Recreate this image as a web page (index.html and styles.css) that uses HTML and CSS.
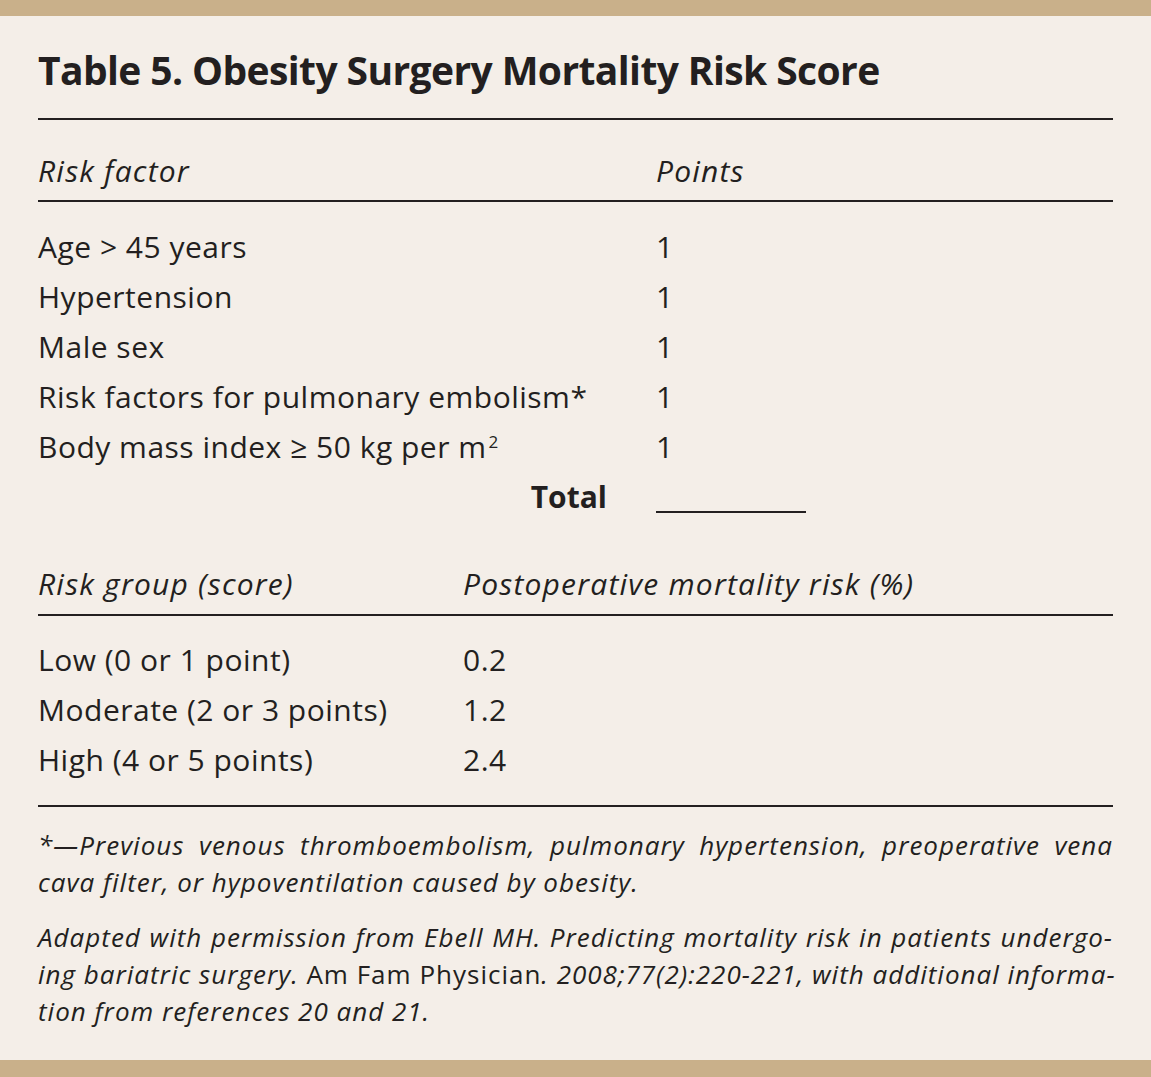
FILE: index.html
```html
<!DOCTYPE html>
<html>
<head>
<meta charset="utf-8">
<link rel="stylesheet" href="styles.css">
</head>
<body>
<div class="page">
  <div class="band"></div>
  <div class="content">
    <h1 class="title">Table 5. Obesity Surgery Mortality Risk Score</h1>
    <table class="t t1">
      <thead>
        <tr><th class="c1">Risk factor</th><th>Points</th></tr>
      </thead>
      <tbody>
        <tr class="first"><td>Age &gt; 45 years</td><td>1</td></tr>
        <tr><td>Hypertension</td><td>1</td></tr>
        <tr><td>Male sex</td><td>1</td></tr>
        <tr><td>Risk factors for pulmonary embolism*</td><td>1</td></tr>
        <tr><td>Body mass index ≥ 50 kg per m<sup>2</sup></td><td>1</td></tr>
        <tr class="total"><td class="tl">Total</td><td><span class="blank"></span></td></tr>
      </tbody>
    </table>
    <table class="t t2">
      <thead>
        <tr><th class="c1">Risk group (score)</th><th>Postoperative mortality risk (%)</th></tr>
      </thead>
      <tbody>
        <tr class="first"><td>Low (0 or 1 point)</td><td>0.2</td></tr>
        <tr><td>Moderate (2 or 3 points)</td><td>1.2</td></tr>
        <tr><td>High (4 or 5 points)</td><td>2.4</td></tr>
      </tbody>
    </table>
    <div class="notes">
      <p><span class="ln j">*—Previous venous thromboembolism, pulmonary hypertension, preoperative vena</span><span class="ln">cava filter, or hypoventilation caused by obesity.</span></p>
      <p><span class="ln j">Adapted with permission from Ebell MH. Predicting mortality risk in patients undergo-</span><span class="ln j">ing bariatric surgery. <span class="up">Am Fam Physician</span>. 2008;77(2):220-221, with additional informa-</span><span class="ln">tion from references 20 and 21.</span></p>
    </div>
  </div>
  <div class="band bottom"></div>
</div>
</body>
</html>
```

FILE: styles.css
```css
html, body {
  margin: 0;
  padding: 0;
  background: #f4eee8;
}
.page {
  width: 1151px;
  height: 1077px;
  display: flex;
  flex-direction: column;
  font-family: "Open Sans", "Noto Sans", sans-serif;
  color: #231f20;
}
.band {
  height: 16px;
  background: #c9b08a;
  flex: none;
}
.band.bottom {
  height: 17px;
  margin-top: auto;
}
.content {
  padding: 0 38px;
  flex: 1;
}
.title {
  margin: 0;
  padding-top: 33px;
  padding-bottom: 27px;
  font-size: 39px;
  font-weight: 700;
  line-height: 42px;
  border-bottom: 2px solid #231f20;
  letter-spacing: -0.6px;
}
.t {
  width: 100%;
  border-collapse: collapse;
  font-size: 30px;
  letter-spacing: 0.5px;
}
.t th {
  font-weight: 400;
  font-style: italic;
  text-align: left;
  letter-spacing: 1.2px;
  padding: 31px 0 9px;
  line-height: 40px;
  border-bottom: 2px solid #231f20;
}
.t2 th {
  padding-top: 47px;
  padding-bottom: 10px;
}
.t td {
  padding: 0;
  height: 50px;
  line-height: 40px;
  vertical-align: bottom;
}
.t1 .c1 { width: 618px; }
.t2 .c1 { width: 425px; }
.t1 tr.first td { height: 65px; }
.t2 tr.first td { height: 64px; }
.t sup {
  font-size: 17px;
  line-height: 0;
  vertical-align: 10px;
  margin-left: 2px;
}
.total .tl {
  text-align: right;
  font-weight: 700;
  letter-spacing: 0;
  padding-right: 49px;
}
.blank {
  display: inline-block;
  width: 150px;
  border-bottom: 2px solid #231f20;
  height: 30px;
  vertical-align: -5px;
}
.notes {
  margin-top: 25px;
  border-top: 2px solid #231f20;
  padding-top: 20px;
  font-size: 26px;
  font-style: italic;
  line-height: 37px;
  letter-spacing: 1px;
}
.notes p {
  margin: 0 0 18px;
}
.notes .ln {
  display: block;
  white-space: nowrap;
}
.notes .ln.j {
  text-align: justify;
  text-align-last: justify;
}
.notes .up { font-style: normal; }
```
